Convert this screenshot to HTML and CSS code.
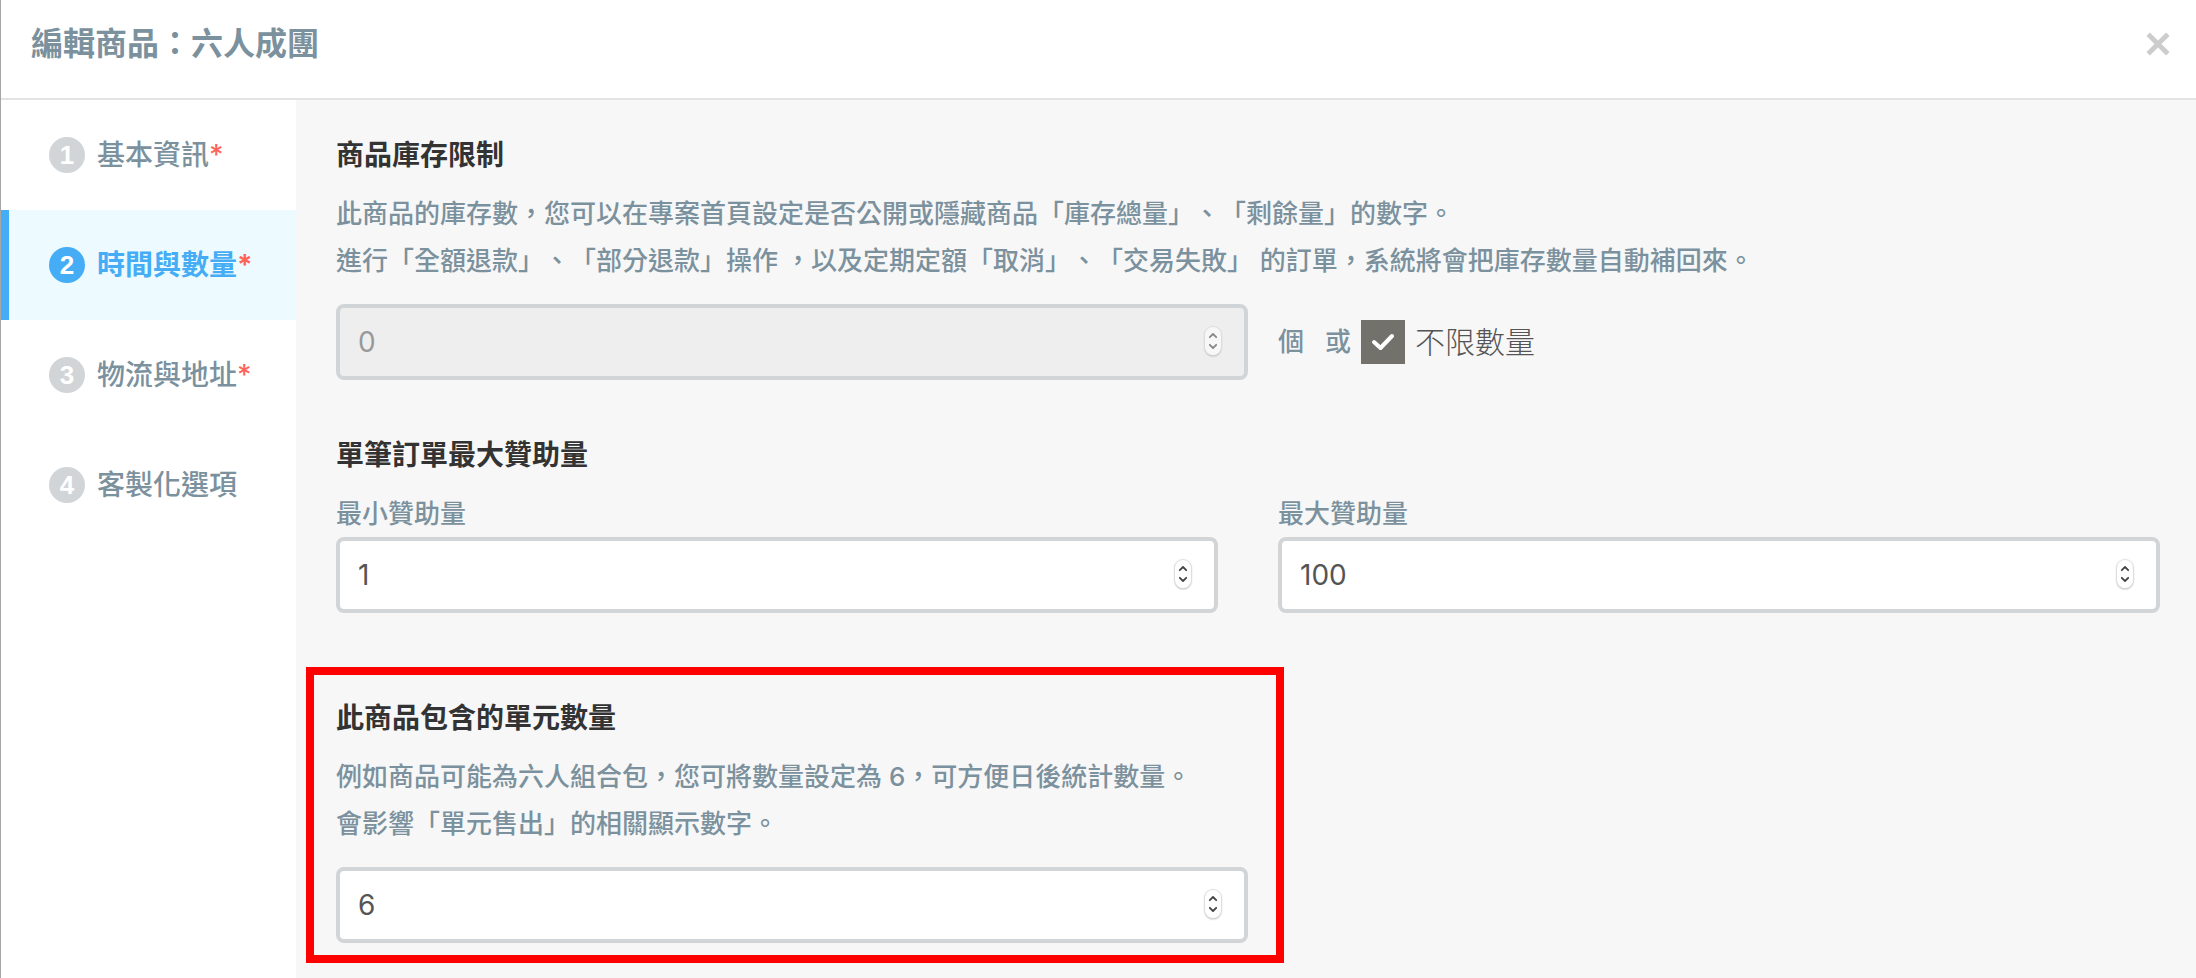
FILE: index.html
```html
<!DOCTYPE html>
<html lang="zh-Hant">
<head>
  <meta charset="UTF-8" />
  <title>編輯商品：六人成團</title>
  <meta name="viewport" content="width=device-width, initial-scale=1.0" />
  <link rel="stylesheet" href="styles.css">
</head>
<body>

  <!-- shared stepper arrows -->
  <svg width="0" height="0" class="sprite" aria-hidden="true">
    <symbol id="stepper" viewBox="0 0 16 28">
      <path d="M4.8 10.2 L8 7 L11.2 10.2 M4.8 17.8 L8 21 L11.2 17.8" fill="none" stroke="currentColor" stroke-width="1.8" stroke-linecap="round" stroke-linejoin="round" />
    </symbol>
  </svg>

  <header class="modal-header">
    <h1>編輯商品：六人成團</h1>
    <button class="close" type="button" aria-label="關閉">
      <svg viewBox="0 0 22 22"><path d="M2 2 L20 20 M20 2 L2 20" stroke="currentColor" stroke-width="4.4" /></svg>
    </button>
  </header>

  <div class="modal-body">
    <nav class="steps">
      <a class="step" href="#basic"><span class="num">1</span><span>基本資訊<i>*</i></span></a>
      <a class="step active" href="#quantity"><span class="num">2</span><span>時間與數量<i>*</i></span></a>
      <a class="step" href="#shipping"><span class="num">3</span><span>物流與地址<i>*</i></span></a>
      <a class="step" href="#custom"><span class="num">4</span><span>客製化選項</span></a>
    </nav>

    <main class="content">
      <section>
        <h2><label for="stock">商品庫存限制</label></h2>
        <p>此商品的庫存數，您可以在專案首頁設定是否公開或隱藏商品「庫存總量」、「剩餘量」的數字。<br>
          進行「全額退款」、「部分退款」操作 ，以及定期定額「取消」、「交易失敗」 的訂單，系統將會把庫存數量自動補回來。</p>
        <div class="stock-row">
          <div class="number">
            <input type="number" id="stock" value="0" disabled>
            <svg class="stepper"><use href="#stepper" /></svg>
          </div>
          <span class="unit">個</span>
          <span class="or">或</span>
          <span class="check">
            <input type="checkbox" id="unlimited" checked>
            <svg viewBox="0 0 44 44"><path d="M13 22 L19.5 28 L31 16" fill="none" stroke="#fff" stroke-width="4" stroke-linecap="round" stroke-linejoin="round" /></svg>
          </span>
          <label for="unlimited" class="unlimited">不限數量</label>
        </div>
      </section>

      <section>
        <h2>單筆訂單最大贊助量</h2>
        <div class="columns">
          <div>
            <label for="min" class="field-label">最小贊助量</label>
            <div class="number">
              <input type="number" id="min" value="1">
              <svg class="stepper"><use href="#stepper" /></svg>
            </div>
          </div>
          <div>
            <label for="max" class="field-label">最大贊助量</label>
            <div class="number">
              <input type="number" id="max" value="100">
              <svg class="stepper"><use href="#stepper" /></svg>
            </div>
          </div>
        </div>
      </section>

      <section class="highlight">
        <h2><label for="units">此商品包含的單元數量</label></h2>
        <p>例如商品可能為六人組合包，您可將數量設定為 6，可方便日後統計數量。<br>
          會影響「單元售出」的相關顯示數字。</p>
        <div class="number">
          <input type="number" id="units" value="6">
          <svg class="stepper"><use href="#stepper" /></svg>
        </div>
      </section>
    </main>
  </div>

</body>
</html>
```
FILE: styles.css
```css
* {
  box-sizing: border-box;
}

body {
  margin: 0;
  min-height: 100vh;
  display: flex;
  flex-direction: column;
  border-left: 1px solid #a6a6a6;
  background-color: #fff;
  color: #7b919d;
  font-family: Inter, "Noto Sans CJK TC", sans-serif;
  font-size: 26px;
  font-weight: 500;
  text-spacing-trim: space-all;
}

h1, h2, p {
  margin: 0;
}

.sprite {
  position: absolute;
}

.modal-header {
  display: flex;
  justify-content: space-between;
  align-items: center;
  height: 100px;
  padding: 0 26px 10px 30px;
  border-bottom: 2px solid #e3e3e3;
}

.modal-header h1 {
  font-size: 32px;
  line-height: 48px;
}

.close {
  width: 24px;
  height: 24px;
  padding: 0;
  border: 0;
  background: none;
  color: #ccc;
  cursor: pointer;
}

.close svg {
  display: block;
}

.modal-body {
  flex: 1;
  display: flex;
}

.steps {
  flex: none;
  width: 295px;
}

.step {
  display: flex;
  align-items: center;
  gap: 12px;
  height: 110px;
  padding-left: 40px;
  border-left: 8px solid transparent;
  color: #7b919d;
  font-size: 28px;
  line-height: 42px;
  text-decoration: none;
}

.step i {
  color: #ff6459;
  font-style: normal;
}

.num {
  width: 36px;
  height: 36px;
  border-radius: 50%;
  background-color: #d1d5d8;
  color: #fff;
  font-family: "Liberation Sans", sans-serif;
  font-size: 26px;
  font-weight: bold;
  line-height: 36px;
  text-align: center;
}

.step.active {
  border-left-color: #45adf5;
  background-color: #edfaff;
  color: #45adf5;
  font-weight: bold;
}

.step.active .num {
  background-color: #45adf5;
}

.content {
  flex: 1;
  padding: 34px 36px 12px 40px;
  background-color: #f7f7f7;
}

section {
  margin-bottom: 54px;
}

h2 {
  margin-bottom: 14px;
  color: #333;
  font-size: 28px;
  line-height: 42px;
}

p {
  margin-bottom: 20px;
  line-height: 47px;
}

.number {
  position: relative;
}

.number input {
  display: block;
  width: 100%;
  height: 76px;
  padding: 0 18px;
  border: 4px solid #d1d5d8;
  border-radius: 8px;
  background-color: #fff;
  color: #555;
  font-family: inherit;
  font-size: 28px;
  appearance: textfield;
}

.number input:disabled {
  background-color: #eee;
  color: #999;
}

.stepper {
  position: absolute;
  top: 23px;
  right: 27px;
  width: 16px;
  height: 28px;
  border-radius: 8px;
  background-color: #fff;
  box-shadow: 0 0 1px 1px #ddd, 0 1px 2px #999;
  color: #444;
}

.number input:disabled + .stepper {
  background-color: #f7f7f7;
  color: #888;
}

.stock-row {
  display: flex;
  align-items: center;
  line-height: 42px;
}

.stock-row .number {
  width: 50%;
}

.unit {
  margin-left: 30px;
}

.or {
  margin: 0 10px 0 21px;
}

.check {
  position: relative;
  width: 44px;
  height: 44px;
}

.check input {
  display: block;
  width: 44px;
  height: 44px;
  margin: 0;
  background-color: #73716b;
  appearance: none;
}

.check svg {
  position: absolute;
  inset: 0;
  pointer-events: none;
}

.unlimited {
  margin-left: 10px;
  color: #555;
  font-size: 30px;
  font-weight: 300;
}

.columns {
  display: grid;
  grid-template-columns: 1fr 1fr;
  gap: 60px;
}

.field-label {
  display: block;
  line-height: 47px;
}

/* red frame around the unit count, its content lines up with the other fields */
.highlight {
  box-sizing: content-box;
  width: 50%;
  margin: 0 0 0 -30px;
  padding: 22px 28px 12px 22px;
  border: 8px solid #f00;
}
```
